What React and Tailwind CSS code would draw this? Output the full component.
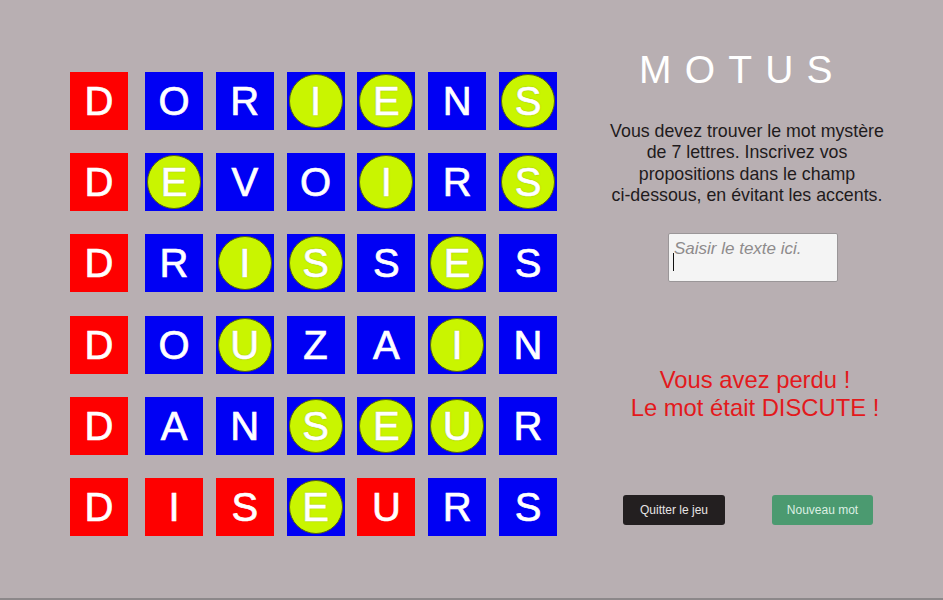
import React from 'react';

const ROWS = [
  'DORIENS:rbbccbc',
  'DEVOIRS:rcbbcbc',
  'DRISSES:rbccbcb',
  'DOUZAIN:rbcbbcb',
  'DANSEUR:rbbcccb',
  'DISEURS:rrrcrbb',
];

const Tile = ({ letter, kind }) => {
  const bg = kind === 'r' ? 'bg-[#fe0000]' : 'bg-[#0000f4]';
  return (
    <div className={`relative w-[58px] h-[58px] shrink-0 flex items-center justify-center ${bg}`}>
      {kind === 'c' && (
        <div className="absolute inset-[2px] rounded-full bg-[#c9f500] border border-[#55650a]" />
      )}
      <span
        className={`relative text-[40px] leading-none text-white [-webkit-text-stroke:0.7px_white] ${kind === 'c' ? '[text-shadow:0_0_1.5px_#6f7f30]' : ''}`}
      >
        {letter}
      </span>
    </div>
  );
};

export default function App() {
  return (
    <div className="w-[943px] h-[600px] bg-[#b8afb2] border-b-2 border-[#8c888a] flex font-['Liberation_Sans',Arial,sans-serif] overflow-hidden">
      {/* grille des propositions */}
      <div className="w-[597px] shrink-0 pl-[70px] pt-[72px] flex flex-col gap-[23.2px]">
        {ROWS.map((row) => {
          const [word, kinds] = row.split(':');
          return (
            <div key={word} className="flex gap-[12.8px]">
              {word.split('').map((l, i) => (
                <div key={i} className={i === 0 ? 'mr-[4.2px]' : ''}>
                  <Tile letter={l} kind={kinds[i]} />
                </div>
              ))}
            </div>
          );
        })}
      </div>

      {/* panneau de droite */}
      <div className="w-[300px] flex flex-col items-start">
        <h1 className="mt-[50px] ml-[42px] text-[39px] leading-none font-light tracking-[13.2px] text-white">MOTUS</h1>

        <p className="mt-[32px] w-[300px] text-center text-[17.8px] leading-[21.3px] text-[#1f1b1c] whitespace-nowrap">
          Vous devez trouver le mot mystère
          <br />
          de 7 lettres. Inscrivez vos
          <br />
          propositions dans le champ
          <br />
          ci-dessous, en évitant les accents.
        </p>

        <div className="relative mt-[27px] ml-[71px] w-[170px] h-[49px] bg-[#f4f4f4] border border-[#9a9698] rounded-[2px]">
          <span className="absolute left-[5px] top-[2px] text-[17px] italic text-[#8e8b8c]">Saisir le texte ici.</span>
          <div className="absolute left-[4px] top-[19px] w-px h-[18px] bg-[#111]" />
        </div>

        <p className="mt-[84px] ml-[8px] w-[300px] text-center text-[23.8px] leading-[28.3px] text-[#e3191c] whitespace-nowrap">
          Vous avez perdu !
          <br />
          Le mot était DISCUTE !
        </p>

        <div className="mt-[72px] ml-[26px] flex gap-[47px]">
          <button className="w-[102px] h-[30px] rounded-[3px] bg-[#231f20] text-[12px] text-[#e6e4e5]">Quitter le jeu</button>
          <button className="w-[101px] h-[30px] rounded-[3px] bg-[#4b9a70] text-[12px] text-[#dcefe3]">Nouveau mot</button>
        </div>
      </div>
    </div>
  );
}
